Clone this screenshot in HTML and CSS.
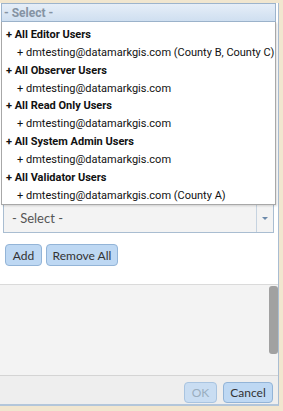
FILE: index.html
```html
<!DOCTYPE html>
<html lang="en">
<head>
    <meta charset="UTF-8">
    <title>Users</title>
    <link rel="stylesheet" href="styles.css">
</head>
<body>
<div class="map">
    <div class="dialog">
        <div class="picker">
            <div class="picker-head">- Select -</div>
            <ul class="picker-list">
                <li class="group">+ All Editor Users</li>
                <li class="user">+ dmtesting@datamarkgis.com (County B, County C)</li>
                <li class="group">+ All Observer Users</li>
                <li class="user">+ dmtesting@datamarkgis.com</li>
                <li class="group">+ All Read Only Users</li>
                <li class="user">+ dmtesting@datamarkgis.com</li>
                <li class="group">+ All System Admin Users</li>
                <li class="user">+ dmtesting@datamarkgis.com</li>
                <li class="group">+ All Validator Users</li>
                <li class="user">+ dmtesting@datamarkgis.com (County A)</li>
            </ul>
        </div>
        <div class="hidden-area"></div>
        <div class="select">
            <span class="select-text">- Select -</span>
            <span class="select-arrow"></span>
        </div>
        <div class="actions">
            <button class="btn btn-add">Add</button>
            <button class="btn btn-remove">Remove All</button>
        </div>
        <div class="user-box">
            <div class="scroll-thumb"></div>
        </div>
        <div class="footer">
            <button class="btn btn-ok disabled">OK</button>
            <button class="btn btn-cancel">Cancel</button>
        </div>
    </div>
</div>
</body>
</html>
```

FILE: styles.css
```css
* {
    padding: 0;
    margin: 0;
    list-style: none;
    box-sizing: border-box;
}

body {
    background: #f1e6cf;
    font-family: Roboto, "Liberation Sans", sans-serif;
    width: 283px;
    height: 411px;
    overflow: hidden;
}

.map {
    padding-top: 3px;
    height: 411px;
}

.dialog {
    width: 279px;
    height: 403px;
    background: #fff;
    border-right: 1px solid #a9bdd2;
    border-bottom: 2px solid #b3c6da;
    display: flex;
    flex-direction: column;
}

.picker {
    position: relative;
    margin-left: 1px;
    width: 275px;
}

.picker-head {
    height: 19px;
    line-height: 18px;
    padding-left: 2px;
    font-size: 12px;
    font-weight: bold;
    color: #8593a3;
    background: linear-gradient(#e6eef8, #cfdff0);
    border: 1px solid #9db4cc;
}

.picker-list {
    position: absolute;
    top: 100%;
    left: 0;
    width: 275px;
    background: #fff;
    border: 1px solid #a8a8a8;
    border-top: 0;
    padding-top: 4px;
    box-shadow: 1px 1px 2px rgba(0, 0, 0, 0.15);
    z-index: 2;
}

.picker-list li {
    height: 17.85px;
    line-height: 17.85px;
    font-size: 11px;
    color: #111;
    white-space: nowrap;
}

.picker-list .group {
    font-weight: bold;
    padding-left: 4px;
}

.picker-list .user {
    padding-left: 15px;
}

.hidden-area {
    height: 181px;
}

.select {
    display: flex;
    margin-left: 3px;
    width: 271px;
    height: 30px;
    background: #f3f3f3;
    border: 1px solid #a9bdd1;
}

.select-text {
    flex: 1;
    line-height: 28px;
    padding-left: 8px;
    font-family: Lato, sans-serif;
    font-size: 13px;
    color: #555;
}

.select-arrow {
    width: 17px;
    border-left: 1px solid #c6d3e0;
    display: flex;
    align-items: center;
    justify-content: center;
}

.select-arrow::after {
    content: "";
    border-left: 3px solid transparent;
    border-right: 3px solid transparent;
    border-top: 3px solid #6c8aab;
    margin-top: 1px;
}

.actions {
    display: flex;
    gap: 4px;
    padding: 11px 0 0 5px;
    height: 51px;
}

.btn {
    height: 22px;
    padding: 0;
    background: #bed8f3;
    border: 1px solid #93b4d7;
    border-radius: 4px;
    font-family: Lato, sans-serif;
    font-size: 12px;
    color: #333;
}

.btn-add {
    width: 37px;
}

.btn-remove {
    width: 72px;
}

.user-box {
    height: 92px;
    background: #f3f3f3;
    border-top: 1px solid #dadada;
    border-bottom: 1px solid #d4d4d4;
    display: flex;
    justify-content: flex-end;
}

.scroll-thumb {
    width: 9px;
    height: 68px;
    margin-top: 1px;
    background: #a1a1a1;
    border-radius: 3px;
}

.footer {
    flex: 1;
    background: #eeeeee;
    display: flex;
    justify-content: flex-end;
    align-items: flex-start;
    gap: 6px;
    padding: 6px 5px 0 0;
}

.footer .btn {
    height: 21px;
}

.btn-ok {
    width: 33px;
}

.btn-cancel {
    width: 50px;
}

.btn.disabled {
    background: #c9ddf2;
    border-color: #a9c4e0;
    color: #9aaebf;
}
```
